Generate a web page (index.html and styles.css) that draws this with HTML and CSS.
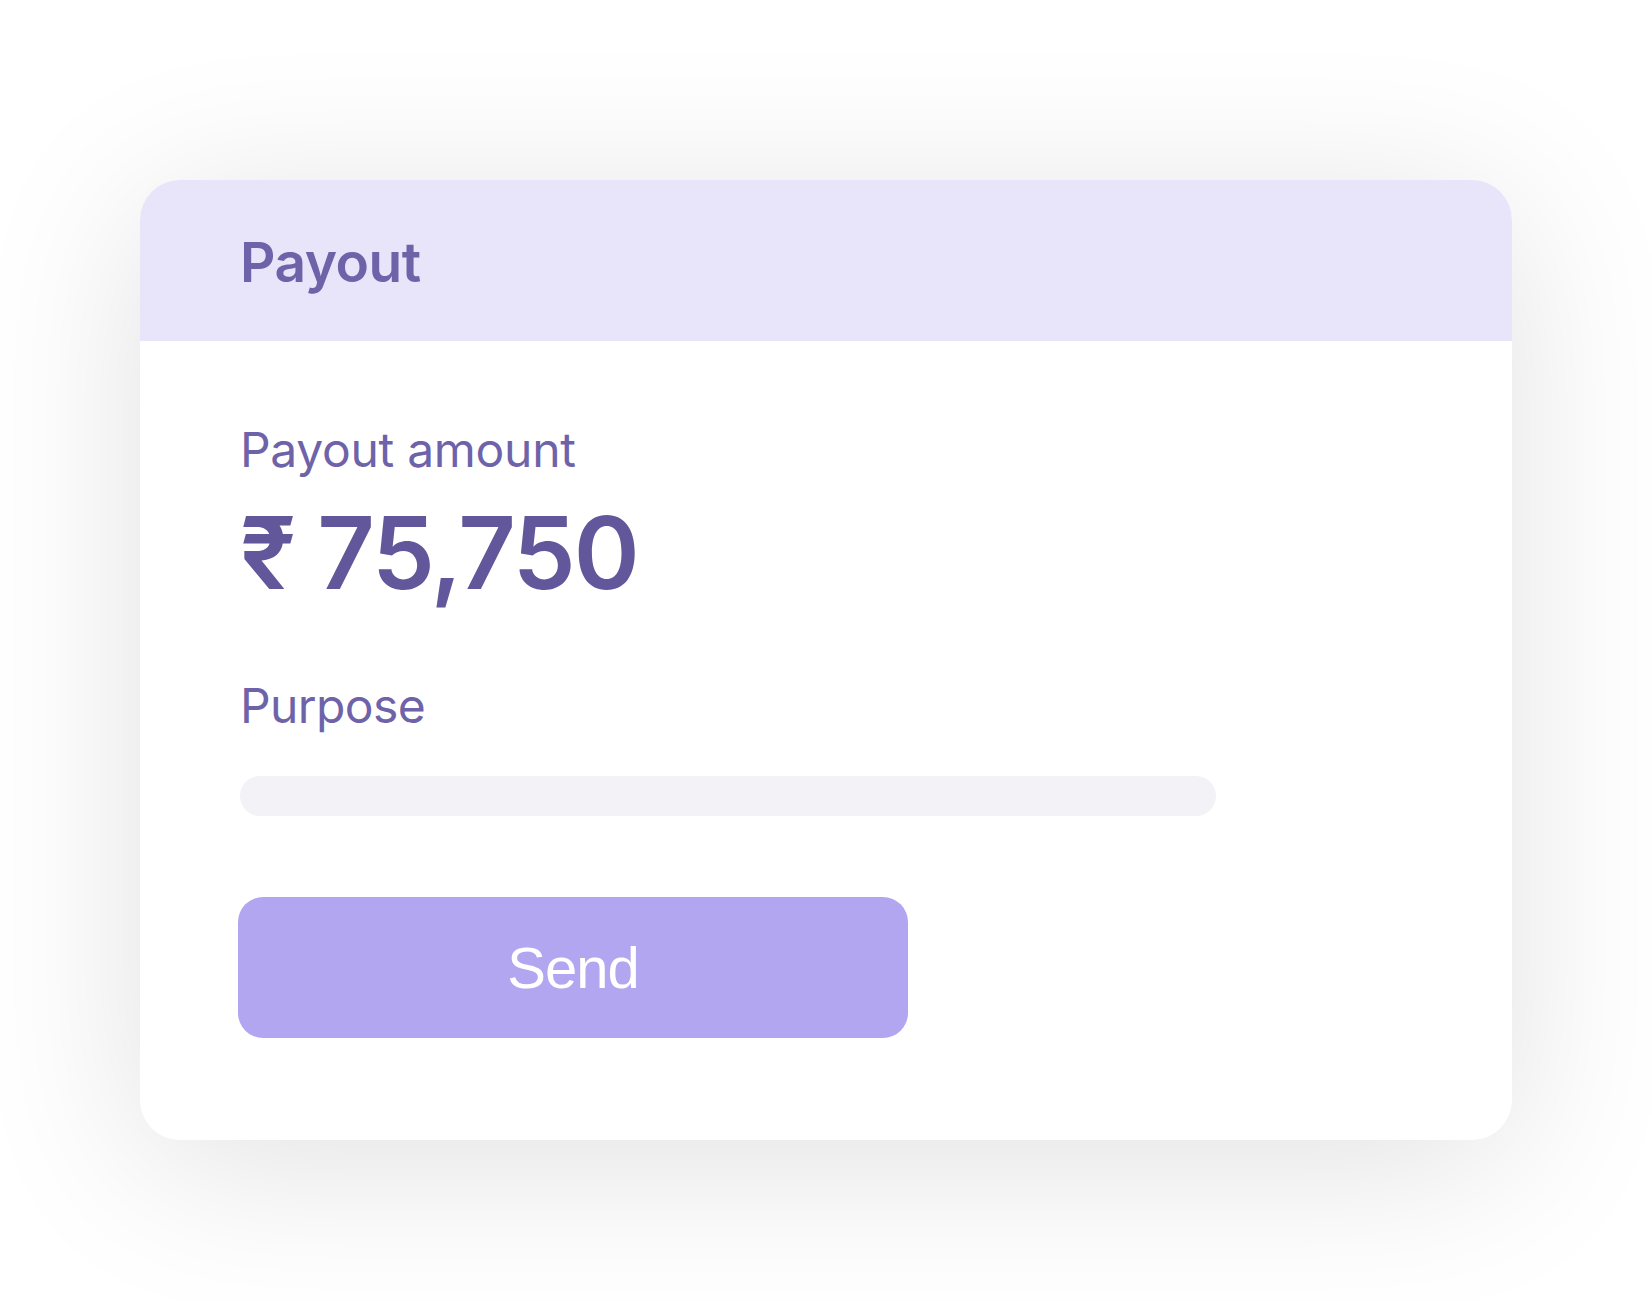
FILE: index.html
```html
<!DOCTYPE html>
<html lang="en">
<head>
<meta charset="utf-8">
<title>Payout</title>
<link rel="stylesheet" href="styles.css">
</head>
<body>
<main class="stage">
  <section class="card">
    <header class="card-header">
      <h1 class="card-title">Payout</h1>
    </header>
    <div class="card-body">
      <p class="label">Payout amount</p>
      <p class="amount"><span class="rupee">₹</span> 75,750</p>
      <p class="label label-purpose">Purpose</p>
      <div class="input-bar"></div>
      <button class="send-btn" type="button">Send</button>
    </div>
  </section>
</main>
</body>
</html>
```

FILE: styles.css
```css
html, body {
  margin: 0;
  padding: 0;
}
body {
  width: 1652px;
  height: 1300px;
  background: #ffffff;
  font-family: Inter, "Noto Sans", sans-serif;
  overflow: hidden;
}
.stage {
  padding: 180px 140px 0 140px;
}
.card {
  width: 1372px;
  height: 960px;
  box-sizing: border-box;
  background: #ffffff;
  border-radius: 40px;
  overflow: hidden;
  box-shadow: 0 24px 170px rgba(0, 0, 0, 0.12);
}
.card-header {
  height: 161px;
  box-sizing: border-box;
  background: #e8e4fa;
  padding: 55px 100px 0 100px;
}
.card-title {
  margin: 0;
  font-size: 55px;
  line-height: 1;
  font-weight: 600;
  color: #6e63a9;
  letter-spacing: -0.5px;
}
.card-body {
  padding: 85px 100px 0 100px;
  display: flex;
  flex-direction: column;
  align-items: flex-start;
}
.label {
  margin: 0;
  font-size: 48px;
  line-height: 1;
  font-weight: 400;
  color: #6e63a9;
  letter-spacing: -0.3px;
}
.amount {
  margin: 29px 0 0 0;
  font-size: 100px;
  line-height: 1;
  font-weight: 600;
  color: #62579a;
  letter-spacing: -2px;
}
.rupee {
  font-family: Inter, "Noto Sans", sans-serif;
}
.label-purpose {
  margin-top: 79px;
  letter-spacing: -0.6px;
}
.input-bar {
  margin-top: 46px;
  width: 976px;
  height: 40px;
  border-radius: 20px;
  background: #f3f2f7;
}
.send-btn {
  margin: 81px 0 0 -2px;
  width: 670px;
  height: 141px;
  border: none;
  border-radius: 25px;
  background: #b3a6f1;
  color: #ffffff;
  font-family: "Liberation Sans", Arial, sans-serif;
  font-size: 58px;
  line-height: 1;
  letter-spacing: -1px;
  display: flex;
  align-items: center;
  justify-content: center;
  padding: 0;
  cursor: pointer;
}
```
